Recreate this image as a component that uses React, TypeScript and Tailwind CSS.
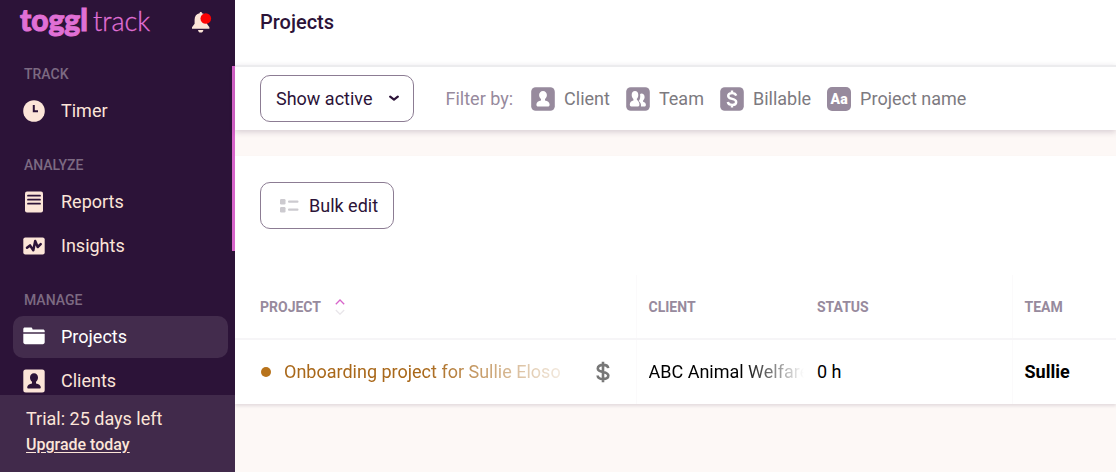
import type { ReactNode } from "react";

function ClockIcon() {
  return (
    <svg viewBox="0 0 22 22" className="h-[22px] w-[22px]" aria-hidden="true">
      <circle cx="11" cy="11" r="10.8" fill="#fce5d8" />
      <path d="M10.8 5v6.2H15" fill="none" stroke="#2c1338" strokeWidth="2" />
    </svg>
  );
}

function ReportsIcon() {
  return (
    <svg viewBox="0 0 22 22" className="h-[22px] w-[22px]" aria-hidden="true">
      <rect x="2" y="0.5" width="18" height="21" rx="2" fill="#fce5d8" />
      <path d="M5 4.7h12M5 8.7h12M5 12.7h12" stroke="#2c1338" strokeWidth="1.8" strokeLinecap="round" />
    </svg>
  );
}

function InsightsIcon() {
  return (
    <svg viewBox="0 0 22 22" className="h-[22px] w-[22px]" aria-hidden="true">
      <rect x="0.3" y="2.5" width="21.4" height="17" rx="2" fill="#fce5d8" />
      <path d="M4 12.800l3-2.400 3.300 4.800L12.200 6l2.500 6 3-2.800" fill="none" stroke="#2c1338" strokeWidth="2.500" strokeLinejoin="round" strokeLinecap="round" />
    </svg>
  );
}

function FolderIcon() {
  return (
    <svg viewBox="0 0 22 22" className="h-[22px] w-[22px]" aria-hidden="true">
      <path d="M.3 6.300V3.100c0-1 .6-1.600 1.600-1.600h6c.8 0 1.300.5 1.500 1.300l.2.700h10.300c1 0 1.800.7 1.800 1.600v1.200z" fill="#fff" />
      <path d="M.3 7.700h21.400v8.600c0 1.100-.9 1.900-2 1.900H2.300c-1.100 0-2-.8-2-1.900z" fill="#fff" />
    </svg>
  );
}

function ClientsIcon() {
  return (
    <svg viewBox="0 0 22 24" className="h-6 w-[22px]" aria-hidden="true">
      <rect x="0.3" y="0.5" width="21.400" height="23" rx="2.500" fill="#fce5d8" />
      <path d="M11 4.200c2.400 0 4 1.800 4 4.200 0 1.800-.8 3.400-2 4.400v1.600c2.600.6 4.800 1.700 4.800 3.900 0 .8-.5 1.200-1.200 1.200H5.400c-.7 0-1.200-.4-1.200-1.200 0-2.200 2.200-3.300 4.800-3.900v-1.600c-1.200-1-2-2.600-2-4.400 0-2.400 1.600-4.200 4-4.200z" fill="#2c1338" />
    </svg>
  );
}

function BellIcon() {
  return (
    <svg viewBox="0 0 22 24" className="h-6 w-[22px]" aria-hidden="true">
      <path d="M9.600 3.200C9.600 2.400 10.100 2 10.800 2s1.200.4 1.200 1.200c3.100.6 4.900 3 4.900 6.200v4.400l2.500 3.500v1.500H2v-1.500l2.600-3.500V9.400c0-3.200 1.900-5.600 5-6.200z" fill="#fce5d8" />
      <path d="M8 20h5.400c-.2 1.600-1.300 2.600-2.700 2.600S8.200 21.600 8 20z" fill="#fce5d8" />
      <circle cx="15.800" cy="8.500" r="5.300" fill="#fd0303" />
    </svg>
  );
}

const PERSON =
  "M12 4c2.200 0 3.900 1.700 3.900 4.100 0 1.700-.8 3.100-1.900 4v1.500c2.500.6 4.600 1.700 4.600 3.900 0 1.400-.6 2-1.800 2H7.200c-1.200 0-1.800-.6-1.800-2 0-2.200 2.100-3.300 4.600-3.900v-1.500c-1.100-.9-1.900-2.300-1.900-4C8.100 5.700 9.800 4 12 4z";

const DOLLAR =
  "M16.200 8.600C15.700 7 14.200 6.100 12.100 6.100c-2.200 0-3.900 1-3.900 2.800 0 4 8 2 8 6 0 1.900-1.700 3-4 3-2.300 0-4-1-4.400-2.900M12 3.500v3M12 17.500v3";

function Badge({ children }: { children: ReactNode }) {
  return (
    <svg viewBox="0 0 24 24" className="h-6 w-6" aria-hidden="true">
      <rect x="0.200" y="0.200" width="23.600" height="23.600" rx="4.500" fill="#978a9d" />
      {children}
    </svg>
  );
}

const filters = [
  {
    label: "Client",
    icon: (
      <Badge>
        <path d={PERSON} fill="#fff" />
      </Badge>
    ),
  },
  {
    label: "Team",
    icon: (
      <Badge>
        <path d="M9 4c2 0 3.300 1.600 3.300 3.900 0 1.700-.6 3.200-1.600 4.200.2 1.600 2.700 2.300 2.700 5.200 0 1.400-.4 2.200-1.400 2.200H5.300c-1 0-1.500-.7-1.500-1.900 0-2.300 1.500-3.400 3.600-4v-1.500c-1-1-1.700-2.500-1.700-4.200C5.700 5.600 7 4 9 4z" fill="#fff" />
        <path d="M15.400 6.600c1.900 0 3.200 1.400 3.200 3.500 0 1.500-.6 2.700-1.500 3.500v1.100c1.600.5 2.800 1.300 2.800 3 0 1.200-.5 1.800-1.400 1.800h-3.600c.5-2.400-.4-4.200-2.100-5.600 1.200-1.400 1.700-3.400 1.300-6.800.4-.3.800-.5 1.300-.5z" fill="#fff" />
      </Badge>
    ),
  },
  {
    label: "Billable",
    icon: (
      <Badge>
        <path d={DOLLAR} fill="none" stroke="#fff" strokeWidth="2.400" />
      </Badge>
    ),
  },
  {
    label: "Project name",
    icon: (
      <span className="flex h-6 w-6 items-center justify-center rounded-[5px] bg-[#978a9d] text-sm font-black text-white">
        Aa
      </span>
    ),
  },
];

const sections = [
  { title: "TRACK", items: [{ label: "Timer", icon: <ClockIcon /> }] },
  {
    title: "ANALYZE",
    items: [
      { label: "Reports", icon: <ReportsIcon /> },
      { label: "Insights", icon: <InsightsIcon /> },
    ],
  },
  {
    title: "MANAGE",
    items: [
      { label: "Projects", icon: <FolderIcon />, active: true },
      { label: "Clients", icon: <ClientsIcon /> },
    ],
  },
];

function Sidebar() {
  return (
    <aside className="relative flex h-full w-[235px] shrink-0 flex-col bg-[#2c1338] text-[#fce5d8]">
      <div className="flex h-16 shrink-0 items-start justify-between pt-[3px] pr-[23px] pl-5">
        <a href="#home" className="flex items-baseline gap-[5px] text-[#e070d5]" aria-label="toggl track">
          <span className="text-[30px] leading-8 font-black [-webkit-text-stroke:1px_#e070d5] [font-family:Lato,sans-serif]">toggl</span>
          <span className="text-[27px] leading-8 font-light [-webkit-text-stroke:0.3px_#e070d5] [font-family:Lato,sans-serif]">track</span>
        </a>
        <button type="button" aria-label="Notifications" className="mt-[7px]">
          <BellIcon />
        </button>
      </div>
      <nav className="flex min-h-0 flex-1 flex-col gap-[23px] overflow-hidden">
        {sections.map((section) => (
          <section key={section.title}>
            <h2 className="mb-[6px] pl-6 text-sm leading-5 font-medium text-[#7c6a82]">{section.title}</h2>
            <ul className="flex flex-col gap-[2px] pr-[7px] pl-[13px]">
              {section.items.map((item) => (
                <li key={item.label}>
                  <a
                    href={"#" + item.label.toLowerCase()}
                    className={
                      "active" in item
                        ? "flex h-[42px] items-center gap-4 rounded-[10px] bg-[#432c4d] pl-[10px] text-lg text-white"
                        : "flex h-[42px] items-center gap-4 rounded-[10px] pl-[10px] text-lg"
                    }
                  >
                    {item.icon}
                    {item.label}
                  </a>
                </li>
              ))}
            </ul>
          </section>
        ))}
      </nav>
      <div className="shrink-0 bg-[#412a4b] px-[26px] pt-3 pb-[14px]">
        <p className="text-lg leading-6">Trial: 25 days left</p>
        <a href="#upgrade" className="block text-base leading-[27px] font-medium underline underline-offset-2">
          Upgrade today
        </a>
      </div>
      <div className="absolute top-[66px] right-0 h-[185px] w-[3px] bg-[#d764ca]" />
    </aside>
  );
}

function Toolbar() {
  return (
    <div className="relative flex shrink-0 items-center border-t-2 border-[#ececee] bg-white pt-2 pb-2 pl-[25px] whitespace-nowrap shadow-[0_2px_6px_rgba(44,19,56,0.18)]">
      <button type="button" className="flex h-[47px] items-center gap-4 rounded-[10px] border border-[#8c7c93] pr-[14px] pl-[15px] text-lg text-[#2c1338]">
        Show active
        <svg viewBox="0 0 10 7" className="h-[7px] w-[10px]" aria-hidden="true">
          <path d="M1.200 1.700L5 4.600l3.800-2.900" fill="none" stroke="#2c1338" strokeWidth="2.200" strokeLinecap="round" strokeLinejoin="round" />
        </svg>
      </button>
      <span className="ml-8 text-lg text-[#978a9d]">Filter by:</span>
      <div className="ml-[18px] flex items-center gap-4">
        {filters.map((filter) => (
          <button key={filter.label} type="button" className="flex items-center gap-[9px] text-lg text-[#7d7a7f]">
            {filter.icon}
            {filter.label}
          </button>
        ))}
      </div>
    </div>
  );
}

function ProjectsTable() {
  return (
    <table className="w-full table-fixed border-collapse text-left whitespace-nowrap">
      <colgroup>
        <col className="w-[401px]" />
        <col className="w-[168px]" />
        <col className="w-[208px]" />
        <col />
      </colgroup>
      <thead>
        <tr className="h-16 border-b-2 border-[#f6f5f7] text-sm text-[#978a9d]">
          <th scope="col" className="border-r border-[#fbfafb] pl-[25px] font-bold">
            <button type="button" className="flex items-center gap-[14px]">
              PROJECT
              <svg viewBox="0 0 10 16" className="h-4 w-[10px]" fill="none" strokeWidth="1.300" aria-hidden="true">
                <path d="M.8 5.200L5 1l4.200 4.200" stroke="#d764ca" />
                <path d="M.8 11L5 15.200 9.200 11" stroke="#e9e6ea" />
              </svg>
            </button>
          </th>
          <th scope="col" className="pl-3 font-bold">CLIENT</th>
          <th scope="col" className="border-r border-[#fbfafb] pl-[13px] font-bold">STATUS</th>
          <th scope="col" className="pl-3 font-bold">TEAM</th>
        </tr>
      </thead>
      <tbody>
        <tr className="h-[65px] text-lg text-black">
          <td className="border-r border-[#fbfafb] pr-[26px] pl-[26px]">
            <div className="flex items-center">
              <span className="h-[10px] w-[10px] shrink-0 rounded-full bg-[#b8731b]" />
              <a href="#onboarding" className="ml-[13px] min-w-0 flex-1 overflow-hidden text-[#a9681a] [mask-image:linear-gradient(to_right,black_50%,transparent_105%)]">
                Onboarding project for Sullie Eloso
              </a>
              <svg viewBox="0 0 14 22" className="ml-[28px] h-[22px] w-[14px] shrink-0" aria-label="Billable">
                <path d="M12.200 7.200C12 5.200 9.900 3.900 7 3.900c-3 0-5.200 1.300-5.200 3.500 0 5 10.500 2.100 10.500 7.200 0 2.300-2.300 3.500-5.300 3.500-3.200 0-5.200-1.400-5.400-3.600M7 .8v20.400" fill="none" stroke="#777" strokeWidth="2.600" />
              </svg>
            </div>
          </td>
          <td className="pl-3">
            <div className="[mask-image:linear-gradient(to_right,black_60%,transparent)]">ABC Animal Welfare</div>
          </td>
          <td className="border-r border-[#fbfafb] pl-[13px]">0 h</td>
          <td className="pl-3 font-bold">Sullie</td>
        </tr>
      </tbody>
    </table>
  );
}

export default function App() {
  return (
    <div className="flex h-screen overflow-hidden [font-family:Roboto,sans-serif]">
      <Sidebar />
      <main className="flex min-w-0 flex-1 flex-col bg-[#fdf8f6]">
        <header className="h-[65px] shrink-0 bg-white pt-2 pl-[25px]">
          <h1 className="text-xl leading-7 font-medium text-[#2c1338]">Projects</h1>
        </header>
        <Toolbar />
        <section className="mt-[26px] bg-white pt-[26px] shadow-[0_2px_3px_rgba(44,19,56,0.12)]">
          <button type="button" className="mb-[46px] ml-[25px] flex h-[47px] items-center gap-[10px] rounded-[10px] border border-[#8c7c93] pr-[15px] pl-[19px] text-lg text-[#2c1338]">
            <svg viewBox="0 0 19 14" className="h-[14px] w-[19px]" fill="#cccacf" aria-hidden="true">
              <rect x="0" y="0" width="5.500" height="5.500" rx="1.200" />
              <rect x="0" y="8" width="5.500" height="5.500" rx="1.200" />
              <rect x="8" y="1.600" width="10.500" height="2.200" rx="1" />
              <rect x="8" y="9.600" width="10.500" height="2.200" rx="1" />
            </svg>
            Bulk edit
          </button>
          <ProjectsTable />
        </section>
      </main>
    </div>
  );
}
